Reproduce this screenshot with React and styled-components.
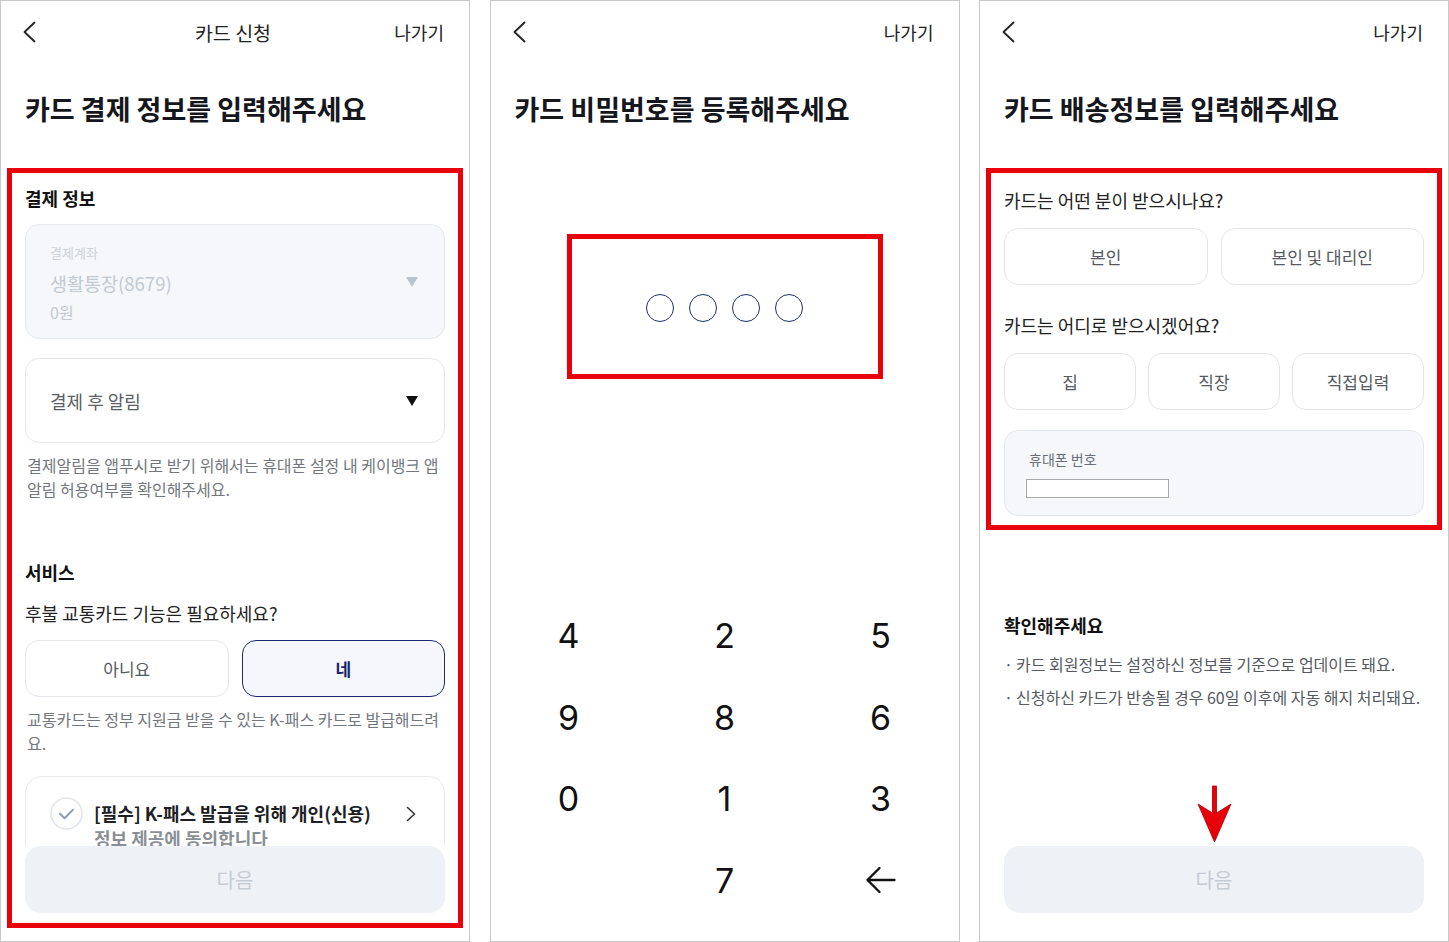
import React from 'react';
import styled, { createGlobalStyle } from 'styled-components';

const GlobalStyle = createGlobalStyle`
  html, body { margin: 0; padding: 0; background: #fff; }
  body { font-family: "Noto Sans CJK KR", Inter, sans-serif; color: #222; }
  * { box-sizing: border-box; }
  button { font-family: inherit; }
`;

const Page = styled.div`
  width: 1449px;
  height: 942px;
  display: flex;
  justify-content: space-between;
  overflow: hidden;
`;

const Panel = styled.section`
  position: relative;
  width: 470px;
  height: 942px;
  border: 1px solid #c9c9c9;
  background: #fff;
  display: flex;
  flex-direction: column;
  overflow: hidden;
`;

const NavBar = styled.header`
  flex: none;
  height: 62px;
  display: grid;
  grid-template-columns: 1fr auto 1fr;
  align-items: center;
  padding: 0 25px 0 21px;
`;

const BackButton = styled.span`
  display: flex;
  align-items: center;
  justify-self: start;
`;

const NavTitle = styled.span`
  font-size: 19.5px;
  color: #222;
`;

const NavAction = styled.span`
  justify-self: end;
  font-size: 18px;
  color: #222;
`;

const Body = styled.div`
  flex: 1;
  min-height: 0;
  overflow: hidden;
  padding: 0 24px;
  display: flex;
  flex-direction: column;
  & > * { flex-shrink: 0; }
`;

const Heading = styled.h1`
  margin: 29px 0 0;
  font-size: 27px;
  line-height: 34px;
  font-weight: 700;
  color: #15171c;
`;

const SectionTitle = styled.h2`
  margin: ${p => p.$mt}px 0 0;
  font-size: 18px;
  line-height: 24px;
  font-weight: 700;
  color: #111;
`;

const Triangle = styled.span`
  flex: none;
  width: 0;
  height: 0;
  border-left: 6px solid transparent;
  border-right: 6px solid transparent;
  border-top: 10px solid ${p => p.$color};
`;

const DisabledSelect = styled.div`
  margin-top: 14px;
  height: 115px;
  border: 1px solid #e6e9ee;
  background: #f5f7fa;
  border-radius: 14px;
  padding: 18px 26px 0 24px;
  display: flex;
  justify-content: space-between;
  align-items: flex-start;
  & > ${Triangle} { margin-top: 34px; }
`;

const SelectValues = styled.div`
  display: flex;
  flex-direction: column;
`;

const SelectLabel = styled.span`
  font-size: 13px;
  line-height: 20px;
  color: #cdd2d9;
`;

const SelectValue = styled.span`
  margin-top: 5px;
  font-size: 18.5px;
  line-height: 30px;
  color: #c3c9d2;
`;

const SelectAmount = styled.span`
  font-size: 16px;
  line-height: 28px;
  color: #c3c9d2;
`;

const Select = styled.div`
  margin-top: 19px;
  height: 85px;
  border: 1px solid #e3e6ea;
  background: #fff;
  border-radius: 14px;
  padding: 0 26px 0 24px;
  display: flex;
  justify-content: space-between;
  align-items: center;
  font-size: 18px;
  color: #5a5f66;
`;

const HelpText = styled.p`
  margin: 10px 0 0;
  padding-left: 2px;
  font-size: 16px;
  line-height: 24px;
  color: #72767d;
`;

const Question = styled.p`
  margin: ${p => p.$mt}px 0 0;
  font-size: 18px;
  line-height: 26px;
  color: #222;
`;

const ChoiceRow = styled.div`
  margin-top: ${p => p.$mt}px;
  display: grid;
  grid-template-columns: repeat(${p => p.$cols}, 1fr);
  gap: ${p => p.$gap}px;
`;

const Choice = styled.button`
  height: 57px;
  border-radius: 14px;
  border: ${p => (p.$selected ? '1.5px solid #1c2b6e' : '1px solid #e3e6ea')};
  background: ${p => (p.$selected ? '#f5f7fc' : '#fff')};
  font-size: 17px;
  font-weight: ${p => (p.$selected ? 700 : 400)};
  color: ${p => (p.$selected ? '#18266b' : '#555a61')};
  padding: 0;
`;

const AgreeCard = styled.div`
  margin-top: 21px;
  border: 1px solid #e6e9ed;
  border-radius: 16px;
  padding: 20px 28px 24px 24px;
  display: flex;
  align-items: flex-start;
  gap: 11px;
`;

const AgreeText = styled.div`
  flex: 1;
  margin-top: 4px;
  font-size: 18px;
  line-height: 25px;
  font-weight: 700;
  color: #1d1f24;
`;

const AgreeSub = styled.div`
  color: #8a8f97;
`;

const Chevron = styled.svg`
  flex: none;
  margin-top: 9px;
`;

const Footer = styled.div`
  flex: none;
  padding: 0 24px 28px;
`;

const NextButton = styled.button`
  width: 100%;
  height: 67px;
  border: none;
  border-radius: 16px;
  background: #eef1f5;
  color: #c6ccd6;
  font-size: 20px;
`;

const PinRow = styled.div`
  margin-top: 168px;
  display: flex;
  justify-content: center;
  gap: 15px;
`;

const PinDot = styled.span`
  width: 28px;
  height: 28px;
  border-radius: 50%;
  border: 1.5px solid #1f2d6e;
`;

const Keypad = styled.div`
  flex: none;
  display: grid;
  grid-template-columns: repeat(3, 1fr);
  grid-auto-rows: 81.5px;
  padding-bottom: 20px;
`;

const Key = styled.button`
  border: none;
  background: none;
  padding: 0;
  font-family: Inter, "Noto Sans CJK KR", sans-serif;
  font-size: 34px;
  color: #111;
  display: flex;
  align-items: center;
  justify-content: center;
`;

const PhoneBox = styled.div`
  margin-top: 20px;
  height: 86px;
  border: 1px solid #e3e7ec;
  background: #f5f7fa;
  border-radius: 14px;
  padding: 18px 22px 0 21px;
`;

const PhoneLabel = styled.div`
  margin-left: 3px;
  font-size: 14px;
  line-height: 20px;
  color: #6b7078;
`;

const PhoneInput = styled.input`
  display: block;
  margin-top: 10px;
  width: 143px;
  height: 19px;
  border: 1px solid #a8a8a8;
  background: #fff;
  padding: 0;
`;

const NoticeList = styled.ul`
  list-style: none;
  margin: 14px 0 0;
  padding: 0;
  display: flex;
  flex-direction: column;
  gap: 7px;
`;

const NoticeItem = styled.li`
  display: flex;
  font-size: 16px;
  line-height: 26px;
  color: #555a61;
  &::before {
    content: '·';
    width: 12px;
    flex: none;
  }
`;

const RedFrame = styled.div`
  position: absolute;
  left: ${p => p.$x}px;
  top: ${p => p.$y}px;
  width: ${p => p.$w}px;
  height: ${p => p.$h}px;
  border: 5px solid #e8000b;
  pointer-events: none;
`;

const RedArrow = styled.svg`
  position: absolute;
  left: 216px;
  top: 783px;
  pointer-events: none;
`;

const BackIcon = () => (
  <svg width="14" height="22" viewBox="0 0 14 22">
    <path d="M12.5 1.5 L2.5 11 L12.5 20.5" fill="none" stroke="#222" strokeWidth="1.8" strokeLinecap="round" strokeLinejoin="round" />
  </svg>
);

const Nav = ({ title }) => (
  <NavBar>
    <BackButton><BackIcon /></BackButton>
    <NavTitle>{title}</NavTitle>
    <NavAction>나가기</NavAction>
  </NavBar>
);

const CheckCircle = () => (
  <svg width="33" height="33" viewBox="0 0 33 33" style={{ flex: 'none' }}>
    <circle cx="16.5" cy="16.5" r="15.5" fill="#fff" stroke="#e0e4e9" strokeWidth="1.5" />
    <path d="M10 16.8 L14.6 21.2 L23 12.6" fill="none" stroke="#929cab" strokeWidth="2" strokeLinecap="round" strokeLinejoin="round" />
  </svg>
);

const BackspaceIcon = () => (
  <svg width="31" height="28" viewBox="0 0 31 28">
    <path d="M29.5 14 H2.5 M14.5 2 L2.5 14 L14.5 26" fill="none" stroke="#111" strokeWidth="2.3" strokeLinecap="round" strokeLinejoin="round" />
  </svg>
);

const keys = ['4', '2', '5', '9', '8', '6', '0', '1', '3', '', '7', 'back'];

export default function App() {
  return (
    <>
      <GlobalStyle />
      <Page>
        <Panel>
          <Nav title="카드 신청" />
          <Body>
            <Heading>카드 결제 정보를 입력해주세요</Heading>
            <SectionTitle $mt={60}>결제 정보</SectionTitle>
            <DisabledSelect>
              <SelectValues>
                <SelectLabel>결제계좌</SelectLabel>
                <SelectValue>생활통장(8679)</SelectValue>
                <SelectAmount>0원</SelectAmount>
              </SelectValues>
              <Triangle $color="#bcc4cf" />
            </DisabledSelect>
            <Select>
              <span>결제 후 알림</span>
              <Triangle $color="#111" />
            </Select>
            <HelpText>결제알림을 앱푸시로 받기 위해서는 휴대폰 설정 내 케이뱅크 앱 알림 허용여부를 확인해주세요.</HelpText>
            <SectionTitle $mt={59}>서비스</SectionTitle>
            <Question $mt={16}>후불 교통카드 기능은 필요하세요?</Question>
            <ChoiceRow $mt={14} $cols={2} $gap={13}>
              <Choice>아니요</Choice>
              <Choice $selected>네</Choice>
            </ChoiceRow>
            <HelpText>교통카드는 정부 지원금 받을 수 있는 K-패스 카드로 발급해드려요.</HelpText>
            <AgreeCard>
              <CheckCircle />
              <AgreeText>
                [필수] K-패스 발급을 위해 개인(신용)
                <AgreeSub>정보 제공에 동의합니다</AgreeSub>
              </AgreeText>
              <Chevron width="10" height="16" viewBox="0 0 10 16">
                <path d="M1.5 1.5 L8.5 8 L1.5 14.5" fill="none" stroke="#333" strokeWidth="1.6" strokeLinecap="round" strokeLinejoin="round" />
              </Chevron>
            </AgreeCard>
          </Body>
          <Footer>
            <NextButton>다음</NextButton>
          </Footer>
          <RedFrame $x={6} $y={167} $w={456} $h={760} />
        </Panel>

        <Panel>
          <Nav title="" />
          <Body>
            <Heading>카드 비밀번호를 등록해주세요</Heading>
            <PinRow>
              <PinDot />
              <PinDot />
              <PinDot />
              <PinDot />
            </PinRow>
          </Body>
          <Keypad>
            {keys.map((k, i) => (
              <Key key={i}>{k === 'back' ? <BackspaceIcon /> : k}</Key>
            ))}
          </Keypad>
          <RedFrame $x={76} $y={233} $w={316} $h={145} />
        </Panel>

        <Panel>
          <Nav title="" />
          <Body>
            <Heading>카드 배송정보를 입력해주세요</Heading>
            <Question $mt={61}>카드는 어떤 분이 받으시나요?</Question>
            <ChoiceRow $mt={15} $cols={2} $gap={13}>
              <Choice>본인</Choice>
              <Choice>본인 및 대리인</Choice>
            </ChoiceRow>
            <Question $mt={27}>카드는 어디로 받으시겠어요?</Question>
            <ChoiceRow $mt={15} $cols={3} $gap={12}>
              <Choice>집</Choice>
              <Choice>직장</Choice>
              <Choice>직접입력</Choice>
            </ChoiceRow>
            <PhoneBox>
              <PhoneLabel>휴대폰 번호</PhoneLabel>
              <PhoneInput type="text" />
            </PhoneBox>
            <SectionTitle $mt={97}>확인해주세요</SectionTitle>
            <NoticeList>
              <NoticeItem>카드 회원정보는 설정하신 정보를 기준으로 업데이트 돼요.</NoticeItem>
              <NoticeItem>신청하신 카드가 반송될 경우 60일 이후에 자동 해지 처리돼요.</NoticeItem>
            </NoticeList>
          </Body>
          <Footer>
            <NextButton>다음</NextButton>
          </Footer>
          <RedFrame $x={6} $y={167} $w={456} $h={362} />
          <RedArrow width="37" height="60" viewBox="0 0 37 60">
            <path d="M16.5 2 L20.5 2 L20.5 29 L35 20 L18.5 58 L2 20 L16.5 29 Z" fill="#e8000b" stroke="#a80000" strokeWidth="0.8" strokeLinejoin="round" />
          </RedArrow>
        </Panel>
      </Page>
    </>
  );
}
